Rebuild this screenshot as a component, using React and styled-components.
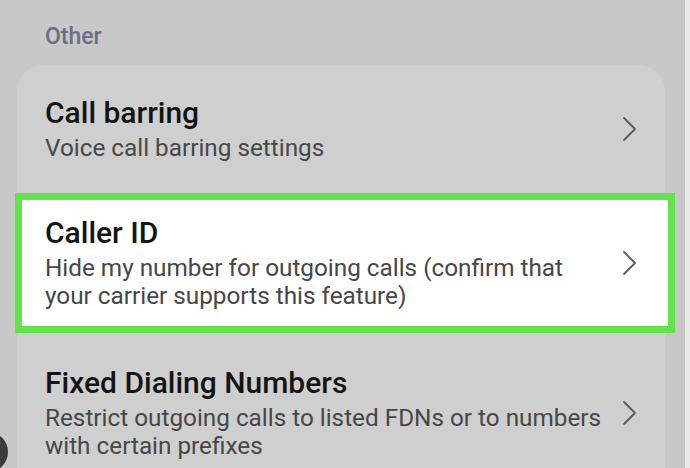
import styled, { createGlobalStyle } from "styled-components";

const GlobalStyle = createGlobalStyle`
  html, body {
    margin: 0;
    padding: 0;
    background: #c8c8c8;
    overflow: hidden;
  }
  body {
    font-family: Roboto, "Liberation Sans", sans-serif;
  }
`;

const Screen = styled.div`
  position: relative;
  width: 690px;
  height: 468px;
  overflow: hidden;
  background: #c8c8c8;
  box-sizing: border-box;
  padding: 0 25px 0 17px;
  /* light strip at the right edge of the screenshot */
  &::after {
    content: "";
    position: absolute;
    top: 0;
    right: 0;
    width: 5px;
    height: 100%;
    background: #e9e9e9;
  }
`;

const SectionTitle = styled.div`
  padding: 22px 0 0 28px;
  height: 65px;
  box-sizing: border-box;
  font-size: 23px;
  font-weight: 500;
  line-height: 30px;
  color: #6a6e86;
`;

const Card = styled.div`
  background: #cfcfcf;
  border-radius: 26px 26px 0 0;
  width: 648px;
  min-height: 410px;
`;

const Row = styled.div`
  display: flex;
  align-items: center;
  box-sizing: border-box;
  min-height: ${(p) => p.$height}px;
  padding: ${(p) => p.$pad};
  background: ${(p) => (p.$active ? "#ffffff" : "transparent")};
  border: ${(p) => (p.$active ? "7px solid #62e34b" : "none")};
  margin: ${(p) => (p.$active ? "0 -10px 0 -2px" : "0")};
`;

const Texts = styled.div`
  flex: 1;
  min-width: 0;
`;

const Title = styled.div`
  font-size: 30px;
  font-weight: 500;
  line-height: 34px;
  color: #141414;
`;

const Subtitle = styled.div`
  margin-top: 4px;
  font-size: 24.3px;
  line-height: 28px;
  color: #474747;
`;

const Chevron = styled.svg`
  flex: none;
  width: 15px;
  height: 26px;
  margin-left: 12px;
`;

const TapDot = styled.div`
  position: absolute;
  left: -32px;
  top: 432px;
  width: 40px;
  height: 40px;
  border-radius: 50%;
  background: #3b3b3b;
`;

const Arrow = () => (
  <Chevron viewBox="0 0 15 26">
    <polyline
      points="2,2 13,13 2,24"
      fill="none"
      stroke="#5a5a5a"
      strokeWidth="1.8"
      strokeLinecap="round"
      strokeLinejoin="round"
    />
  </Chevron>
);

const items = [
  {
    title: "Call barring",
    sub: "Voice call barring settings",
    height: 128,
    pad: "0 28px 0 28px",
  },
  {
    title: "Caller ID",
    sub: "Hide my number for outgoing calls (confirm that your carrier supports this feature)",
    height: 140,
    pad: "8px 31px 8px 23px",
    active: true,
  },
  {
    title: "Fixed Dialing Numbers",
    sub: "Restrict outgoing calls to listed FDNs or to numbers with certain prefixes",
    height: 150,
    pad: "30px 28px 20px 28px",
  },
];

export default function App() {
  return (
    <Screen>
      <GlobalStyle />
      <SectionTitle>Other</SectionTitle>
      <Card>
        {items.map((it) => (
          <Row key={it.title} $height={it.height} $pad={it.pad} $active={it.active}>
            <Texts>
              <Title>{it.title}</Title>
              <Subtitle>{it.sub}</Subtitle>
            </Texts>
            <Arrow />
          </Row>
        ))}
      </Card>
      <TapDot />
    </Screen>
  );
}
